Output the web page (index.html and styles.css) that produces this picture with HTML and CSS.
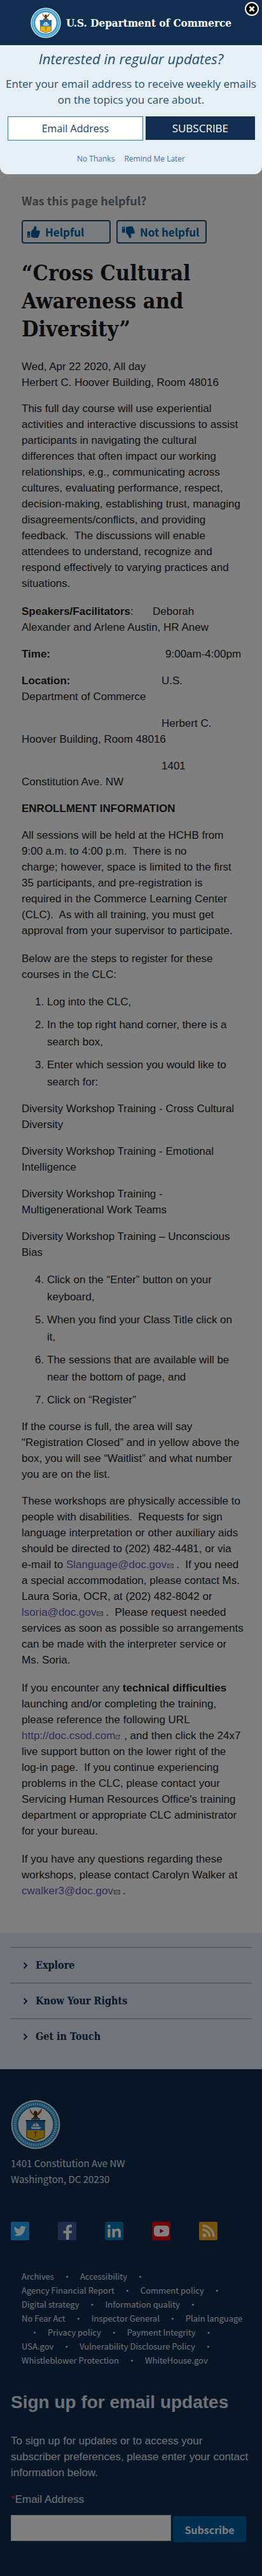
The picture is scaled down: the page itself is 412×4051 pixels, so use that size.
FILE: index.html
```html
<!DOCTYPE html>
<html lang="en">
<head>
<meta charset="utf-8">
<meta name="viewport" content="width=device-width, initial-scale=1">
<title>“Cross Cultural Awareness and Diversity” | U.S. Department of Commerce</title>
<link rel="stylesheet" href="styles.css">
</head>
<body>
<svg class="defs" width="0" height="0" aria-hidden="true">
  <symbol id="seal" viewBox="0 0 78 78">
    <circle cx="39" cy="39" r="38.5" fill="#e9f1f6"/>
    <circle cx="39" cy="39" r="36.5" fill="#2f9fd6"/>
    <circle cx="39" cy="39" r="32.2" fill="none" stroke="#b4dcf0" stroke-width="3.4" stroke-dasharray="1.800 1.700"/>
    <circle cx="39" cy="39" r="28" fill="#fff" stroke="#12618f" stroke-width="1.2"/>
    <path d="M29 14c2 7 5 10 8 11l-3 4h10l-3-4c4-1 7-4 8-11-3 2-5 5-7 8l-2-3-3 0-2 3c-2-3-3-6-6-8z" fill="#8a5a1a"/>
    <path d="M36 19l3-2 3 3-1 8h-4z" fill="#5b3510"/>
    <rect x="32" y="29" width="14" height="2.500" rx="1" fill="#28556e"/>
    <path d="M23.500 32h31v2l-1.500 1H25L23.500 34z" fill="#123b5e"/>
    <path d="M25 34h28v24c0 3-8 3-14 6.500C33 61 25 61 25 58z" fill="#e8b514" stroke="#5b4612" stroke-width="1.200"/>
    <path d="M25 34h28v14H25z" fill="#1775b5"/>
    <path d="M31 43h17l-2 3H33zM34 42c0-3 2-4 4-5v5zm5 0v-6c3 1 5 3 6 6z" fill="#e6f1f6"/>
    <path d="M39 50v9M36.500 51h5" stroke="#8a5a1a" stroke-width="1.500"/>
  </symbol>
  <symbol id="mail" viewBox="0 0 10 7">
    <path d="M.5.5h9v6h-9zM.5.8L5 4 9.500.8M.5 6.200L3.700 3.200M9.500 6.200L6.300 3.200" fill="none" stroke="#666" stroke-width=".9"/>
  </symbol>
  <symbol id="thumb" viewBox="0 0 20 20">
    <path d="M0 9h4.500v9.500H0zM6 9l4-4.500C11 3 10.500.5 12 .5c3 0 3 4 1.500 7H18c2.500 0 2 3 1 3.300 1 1.200.3 2.700-.7 2.900.8 1.200 0 2.500-1 2.600.5 1.700-.8 2.700-2.300 2.700h-4C9 19 8 18 6 17.500z" fill="#005ea2"/>
    <circle cx="2.300" cy="16.300" r="1" fill="#f4f9fd"/>
  </symbol>
</svg>

<div class="page">
  <main class="content">
    <section class="feedback">
      <h2 class="feedback-title">Was this page helpful?</h2>
      <div class="feedback-buttons">
        <button class="vote" type="button"><svg class="vote-icon" aria-hidden="true"><use href="#thumb"/></svg>Helpful</button>
        <button class="vote" type="button"><svg class="vote-icon vote-icon-down" aria-hidden="true"><use href="#thumb"/></svg>Not helpful</button>
      </div>
    </section>

    <h1 class="title">“Cross Cultural Awareness and Diversity”</h1>

    <p class="event-meta">Wed, Apr 22 2020, All day<br>Herbert C. Hoover Building, Room 48016</p>

    <div class="prose">
      <p class="long">This full day course will use experiential activities and interactive discussions to assist participants in navigating the cultural differences that often impact our working relationships, e.g., communicating across cultures, evaluating performance, respect, decision-making, establishing trust, managing disagreements/conflicts, and providing feedback.&nbsp; The discussions will enable attendees to understand, recognize and respond effectively to varying practices and situations.</p>
      <p><span class="label label-speakers"><strong>Speakers/Facilitators</strong>:</span>Deborah<br>Alexander and Arlene Austin, HR Anew</p>
      <p><span class="label label-time"><strong>Time:</strong></span>9:00am-4:00pm</p>
      <p><span class="label"><strong>Location:</strong></span>U.S.<br>Department of Commerce</p>
      <p><span class="label"></span>Herbert C.<br>Hoover Building, Room 48016</p>
      <p><span class="label"></span>1401<br>Constitution Ave. NW</p>
      <p><strong>ENROLLMENT INFORMATION</strong></p>
      <p class="long">All sessions will be held at the HCHB from 9:00 a.m. to 4:00 p.m.&nbsp; There is no charge;&nbsp;however, space is limited to the first 35 participants, and pre-registration is required in the Commerce Learning Center (CLC).&nbsp; As with all training, you must get approval from your supervisor to participate.</p>
      <p>Below are the steps to register for these courses in the CLC:</p>
      <ol>
        <li>Log into the CLC,</li>
        <li>In the top right hand corner, there is a search box,</li>
        <li>Enter which session you would like to search for:</li>
      </ol>
      <p>Diversity Workshop Training - Cross Cultural Diversity</p>
      <p>Diversity Workshop Training - Emotional Intelligence</p>
      <p>Diversity Workshop Training - Multigenerational Work Teams</p>
      <p>Diversity Workshop Training – Unconscious Bias</p>
      <ol start="4">
        <li>Click on the “Enter” button on your keyboard,</li>
        <li>When you find your Class Title click on it,</li>
        <li>The sessions that are available will be near the bottom of page, and</li>
        <li>Click on “Register”</li>
      </ol>
      <p>If the course is full, the area will say "Registration Closed” and in yellow above the box, you will see “Waitlist” and what number you are on the list.</p>
      <p class="long">These workshops are physically accessible to people with disabilities.&nbsp; Requests for sign language interpretation or other auxiliary aids should be directed to (202) 482-4481, or via <span class="keep">e-mail</span> to <a href="mailto:Slanguage@doc.gov">Slanguage@doc.gov<svg class="link-icon" aria-hidden="true"><use href="#mail"/></svg></a>.&nbsp; If you need a special accommodation, please contact Ms. Laura Soria, OCR, at (202) 482-8042 or <a href="mailto:lsoria@doc.gov">lsoria@doc.gov<svg class="link-icon" aria-hidden="true"><use href="#mail"/></svg></a>.&nbsp; Please request needed services as soon as possible so arrangements can be made with the interpreter service or Ms.&nbsp;Soria.</p>
      <p class="long">If you encounter any <strong>technical difficulties</strong> launching and/or completing the training, please reference the following URL <a href="http://doc.csod.com">http://doc.csod.com<svg class="link-icon link-icon-external" viewBox="0 0 8 7" aria-hidden="true"><path d="M4.500 1H.500v5.500h5V3.500M3 4l3-3M4.500.6h2v2" fill="none" stroke="#666" stroke-width=".9"/></svg></a> , and then click the 24x7 live support button on the lower right of the <span class="keep">log-in</span> page.&nbsp; If you continue experiencing problems in the CLC, please contact your Servicing Human Resources Office's training department or appropriate CLC administrator for your bureau.</p>
      <p>If you have any questions regarding these workshops, please contact Carolyn Walker at <a href="mailto:cwalker3@doc.gov">cwalker3@doc.gov<svg class="link-icon" aria-hidden="true"><use href="#mail"/></svg></a>.</p>
    </div>
  </main>

  <nav class="sections" aria-label="Footer sections">
    <button class="section" type="button"><svg class="chevron" viewBox="0 0 8 12" aria-hidden="true"><path d="M1.500 1.500L6 6l-4.500 4.500"/></svg>Explore</button>
    <button class="section" type="button"><svg class="chevron" viewBox="0 0 8 12" aria-hidden="true"><path d="M1.500 1.500L6 6l-4.500 4.500"/></svg>Know Your Rights</button>
    <button class="section" type="button"><svg class="chevron" viewBox="0 0 8 12" aria-hidden="true"><path d="M1.500 1.500L6 6l-4.500 4.500"/></svg>Get in Touch</button>
  </nav>

  <footer class="footer">
    <svg class="footer-seal" role="img" aria-label="Department of Commerce seal"><use href="#seal"/></svg>
    <address class="address">1401 Constitution Ave NW<br>Washington, DC 20230</address>
    <div class="social">
      <a href="#twitter" aria-label="Twitter"><svg viewBox="0 0 29 29"><rect width="29" height="29" rx="2" fill="#1da1f2"/><path d="M24 8.500c-.7.300-1.400.5-2.200.6.800-.5 1.400-1.200 1.700-2.100-.8.400-1.600.8-2.500.9A3.900 3.900 0 0 0 14.400 11.500 11 11 0 0 1 6.300 7.400a3.900 3.900 0 0 0 1.200 5.200c-.6 0-1.200-.2-1.700-.5 0 1.900 1.300 3.500 3.100 3.900-.6.100-1.200.2-1.700.1.500 1.500 1.900 2.600 3.600 2.700A7.800 7.800 0 0 1 5 20.400C12.500 25 22 20.300 22 10.600c.8-.6 1.500-1.300 2-2.100z" fill="#fff"/></svg></a>
      <a href="#facebook" aria-label="Facebook"><svg viewBox="0 0 29 29"><rect width="29" height="29" rx="2" fill="#3b5998"/><path d="M13 28V18H8.500v-4H13v-3.500C13 6.500 15.500 4.500 19 4.500l3 .2v3.800h-2.300c-1.800 0-2.200.9-2.200 2.200V14H22l-.6 4h-3.900v10z" fill="#fff"/></svg></a>
      <a href="#linkedin" aria-label="LinkedIn"><svg viewBox="0 0 29 29"><rect width="29" height="29" rx="2" fill="#0077b5"/><path d="M4.500 11h4v13.500h-4zM11.500 11h4v2c1-1.500 2.300-2.400 4.500-2.400 4 0 5 2.600 5 6.200v7.700h-4v-7c0-1.800-.4-3.300-2.300-3.300-2.200 0-3 1.500-3 3.300v7h-4.200z" fill="#fff"/><circle cx="6.500" cy="7" r="2.400" fill="#fff"/></svg></a>
      <a href="#youtube" aria-label="YouTube"><svg viewBox="0 0 29 29"><rect width="29" height="29" rx="2" fill="#f00000"/><rect x="3" y="6" width="24" height="17" rx="5" fill="#fff"/><path d="M12.500 11v7l6-3.500z" fill="#c4001d"/></svg></a>
      <a href="#rss" aria-label="RSS"><svg viewBox="0 0 29 29"><rect width="29" height="29" rx="2" fill="#f0a30a"/><circle cx="8.500" cy="21.500" r="3" fill="#fff"/><path d="M5.500 12.500a11 11 0 0 1 11 11M5.500 6a17.500 17.500 0 0 1 17.500 17.500" fill="none" stroke="#fff" stroke-width="3.200"/></svg></a>
    </div>
    <nav class="links" aria-label="Policies">
      <a href="#archives">Archives</a><span class="dot">·</span><a href="#accessibility">Accessibility</a><span class="dot">·</span><br>
      <a href="#financial">Agency Financial Report</a><span class="dot">·</span><a href="#comment">Comment policy</a><span class="dot">·</span><br>
      <a href="#digital">Digital strategy</a><span class="dot">·</span><a href="#quality">Information quality</a><span class="dot">·</span><br>
      <a href="#nofear">No Fear Act</a><span class="dot">·</span><a href="#inspector">Inspector General</a><span class="dot">·</span><a href="#plain">Plain language</a><br>
      <span class="dot">·</span><a href="#privacy">Privacy policy</a><span class="dot">·</span><a href="#payment">Payment Integrity</a><span class="dot">·</span><br>
      <a href="#usa">USA.gov</a><span class="dot">·</span><a href="#vulnerability">Vulnerability Disclosure Policy</a><span class="dot">·</span><br>
      <a href="#whistleblower">Whistleblower Protection</a><span class="dot">·</span><a href="#whitehouse">WhiteHouse.gov</a>
    </nav>
    <h2 class="signup-title">Sign up for email updates</h2>
    <p class="signup-text">To sign up for updates or to access your subscriber preferences, please enter your contact information below.</p>
    <form class="signup">
      <label class="signup-label" for="footer-email"><span class="required">*</span>Email Address</label>
      <div class="signup-row">
        <input class="signup-input" id="footer-email" type="email">
        <button class="signup-button" type="button">Subscribe</button>
      </div>
    </form>
  </footer>

  <div class="backdrop"></div>

  <section class="popup" role="dialog" aria-label="Email updates">
    <div class="popup-brand">
      <svg class="popup-seal" aria-hidden="true"><use href="#seal"/></svg>
      <span>U.S. Department of Commerce</span>
    </div>
    <form class="popup-body">
      <h2 class="popup-title">Interested in regular updates?</h2>
      <p class="popup-text">Enter your email address to receive weekly emails on the topics you care about.</p>
      <div class="popup-row">
        <input class="popup-input" type="email" placeholder="Email Address" aria-label="Email Address">
        <button class="popup-button" type="button">SUBSCRIBE</button>
      </div>
      <div class="popup-links"><a href="#no">No Thanks</a><a href="#later">Remind Me Later</a></div>
    </form>
    <button class="close" type="button" aria-label="Close"><svg viewBox="0 0 24 24"><circle cx="12" cy="12" r="10" fill="#000" stroke="#fff" stroke-width="2"/><path d="M8.500 8.500l7 7M15.500 8.500l-7 7" stroke="#fff" stroke-width="2.800"/></svg></button>
  </section>
</div>
</body>
</html>
```
FILE: styles.css
```css
* { box-sizing: border-box; }

body {
  margin: 0;
  background: #fff;
  color: #1b1b1b;
  font: 17px/25px "Liberation Sans", Arial, sans-serif;
}

h1, h2, p, ol { margin: 0; padding: 0; }
button, input { font: inherit; }
svg { display: block; }
.defs { position: absolute; }

.page { position: relative; }

.content { padding: 300px 29px 37px 34px; }

/* Feedback */
.feedback-title {
  color: #71767a;
  font: bold 18px/30px "Noto Sans CJK SC", "Noto Sans", sans-serif;
}
.feedback-buttons { display: flex; gap: 9px; margin-top: 16px; }
.vote {
  display: flex;
  align-items: center;
  gap: 8px;
  width: 140px;
  height: 37px;
  padding: 0 7px;
  border: 2px solid #1a4f80;
  border-radius: 4px;
  background: #f4f9fd;
  color: #005ea2;
  font: bold 17px/24px "Noto Sans CJK SC", "Noto Sans", sans-serif;
  white-space: nowrap;
}
.vote + .vote { width: 142px; }
.vote-icon { flex: none; width: 20px; height: 20px; }
.vote-icon-down { transform: scaleY(-1); }

/* Event */
.title {
  margin-top: 24px;
  font: bold 34px/44px "DejaVu Serif Condensed", "DejaVu Serif", serif;
}
.event-meta { margin-top: 25px; }
.prose { margin-top: 16px; }
.prose p { margin-bottom: 17px; }
.prose .long { margin-bottom: 19px; }
.prose ol { margin-bottom: 16px; padding: 0 5px 0 40px; line-height: 27px; }
.prose li + li { margin-top: 9px; }
.prose a { color: #6a54b0; text-decoration: none; white-space: nowrap; }
.keep { white-space: nowrap; }
.label { display: inline-block; width: 220px; }
.label-speakers { width: 206px; }
.label-time { width: 226px; }
.link-icon { display: inline-block; width: 10px; height: 7px; margin: 0 4px 0 1px; }
.link-icon-external { width: 8px; margin: 0 0 0 1px; }

/* Section toggles */
.sections { padding: 22px 16px 24px; background: #e2e9f6; }
.section {
  display: flex;
  align-items: center;
  gap: 12px;
  width: 100%;
  height: 56px;
  padding: 0 20px;
  border: 0;
  border-top: 1px solid #9aa3b3;
  background: none;
  color: #112e51;
  font: bold 16px/24px "DejaVu Serif Condensed", "DejaVu Serif", serif;
}
.chevron { width: 8px; height: 12px; fill: none; stroke: #112e51; stroke-width: 2; }

/* Footer */
.footer { padding: 48px 17px 53px; background: #112b4c; color: #dce4ef; }
.footer-seal { width: 78px; height: 78px; }
.address { margin-top: 9px; font: 15px/25px "Noto Sans CJK SC", "Noto Sans", sans-serif; }
.social { display: flex; gap: 45px; margin-top: 55px; }
.social svg { width: 29px; height: 29px; }
.links {
  margin-top: 46px;
  padding-left: 17px;
  font: 13px/22px "Noto Sans CJK SC", "Noto Sans", sans-serif;
  white-space: nowrap;
}
.links a { color: inherit; text-decoration: none; }
.dot { display: inline-block; width: 41px; text-align: center; }
.signup-title { margin-top: 37px; font-size: 28px; line-height: 36px; }
.signup-text { margin-top: 30px; }
.signup-label { display: block; margin-top: 17px; }
.required { color: #f0204a; }
.signup-row { display: flex; gap: 3px; margin-top: 12px; }
.signup-input { flex: 1; min-width: 0; height: 41px; border: 1px solid #d6d7d9; background: #fff; }
.signup-button {
  width: 115px;
  height: 41px;
  margin: 2px 8px 0 0;
  border: 0;
  border-radius: 3px;
  background: #005ea2;
  color: #fff;
  font: bold 16px/24px "Noto Sans CJK SC", "Noto Sans", sans-serif;
}

/* Subscribe popup */
.backdrop { position: absolute; inset: 0; background: rgba(0, 0, 0, .5); }
.popup {
  position: absolute;
  top: 0;
  right: 0;
  left: 0;
  overflow: hidden;
  border-radius: 0 0 12px 12px;
  background: #e7eff6;
  color: #205070;
  font-family: "Open Sans", sans-serif;
  text-align: center;
}
.popup-brand {
  display: flex;
  align-items: center;
  justify-content: center;
  gap: 8px;
  height: 71px;
  background: #112e51;
  color: #fff;
  font: bold 17px/24px "DejaVu Serif Condensed", "DejaVu Serif", serif;
}
.popup-seal { width: 48px; height: 48px; }
.popup-body { padding: 6px 0 15px; }
.popup-title { font-size: 22px; font-style: italic; font-weight: 400; line-height: 30px; }
.popup-text { margin-top: 12px; padding: 0 8px; }
.popup-row { display: flex; gap: 4px; margin-top: 14px; padding: 0 11px 0 12px; }
.popup-input {
  flex: 6;
  min-width: 0;
  height: 38px;
  border: 1px solid #3d72a8;
  border-radius: 0;
  background: #fff;
  font-size: 16px;
  text-align: center;
}
.popup-input::placeholder { color: #20405f; opacity: 1; }
.popup-button { flex: 5; height: 37px; padding: 0; border: 0; background: #112e51; color: #fff; }
.popup-links { display: flex; justify-content: center; gap: 15px; margin-top: 20px; font-size: 12px; line-height: 18px; }
.popup-links a { color: #3d72a8; text-decoration: none; }
.close { position: absolute; top: 2px; right: 4px; width: 24px; height: 24px; padding: 0; border: 0; background: none; }
```
